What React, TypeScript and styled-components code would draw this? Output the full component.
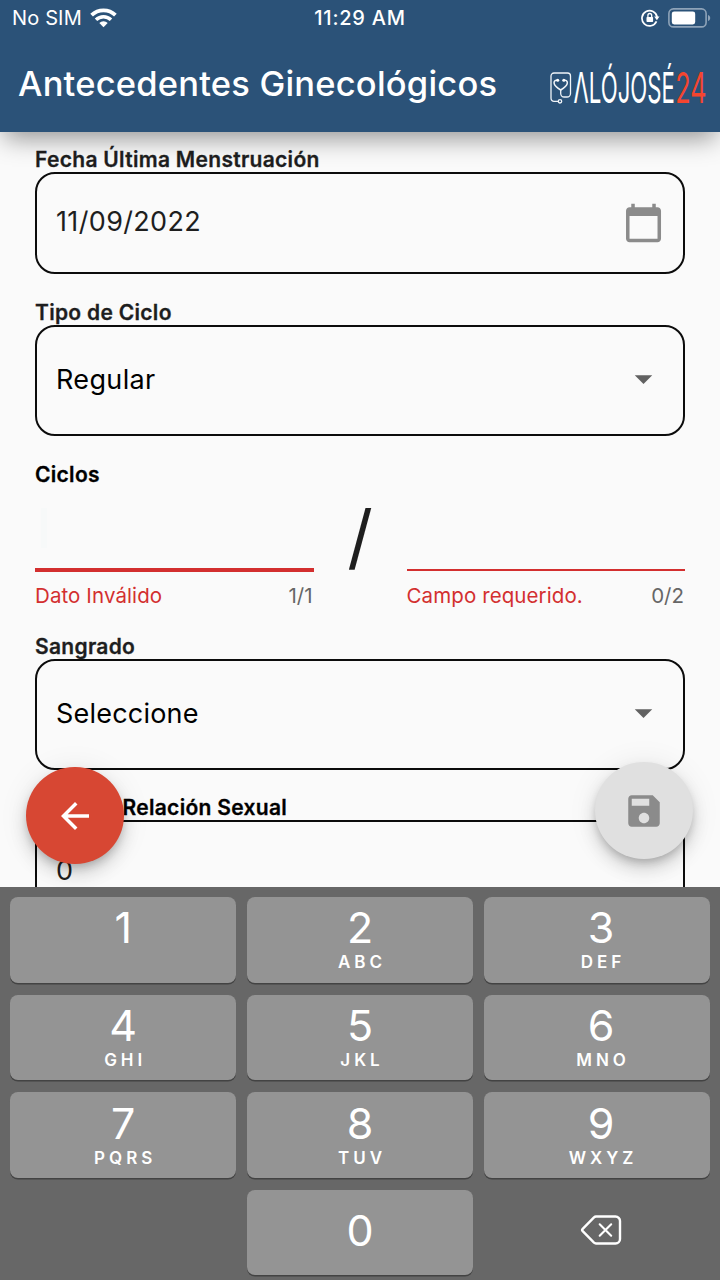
import React from "react";
import styled, { createGlobalStyle } from "styled-components";

const GlobalStyle = createGlobalStyle`
  * { box-sizing: border-box; }
  html, body { margin: 0; padding: 0; background: #fafafa; }
  body { font-family: Inter, "Liberation Sans", sans-serif; overflow: hidden; }
`;

const Screen = styled.div`
  width: 720px;
  height: 1280px;
  display: flex;
  flex-direction: column;
  overflow: hidden;
  background: #fafafa;
  white-space: nowrap;
`;

const Header = styled.header`
  position: relative;
  z-index: 1;
  flex: none;
  height: 132px;
  background: #2b5278;
  color: #fff;
  box-shadow: 0 10px 24px -4px rgba(0, 0, 0, 0.42);
`;

const StatusBar = styled.div`
  height: 37px;
  padding: 0 12px;
  display: grid;
  grid-template-columns: 1fr auto 1fr;
  align-items: center;
  font-size: 20px;
  line-height: 37px;
`;

const StatusGroup = styled.div<{ $end?: boolean }>`
  display: flex;
  align-items: center;
  justify-content: ${(p) => (p.$end ? "flex-end" : "flex-start")};
  gap: 8px;
  margin-right: ${(p) => (p.$end ? -3 : 0)}px;

  svg {
    margin-bottom: 2px;
  }
`;

const Carrier = styled.span`
  letter-spacing: 0.15px;
`;

const Clock = styled.span`
  font-weight: 500;
  letter-spacing: 0.75px;
`;

const TitleBar = styled.div`
  height: 95px;
  padding: 0 12px 2px 18px;
  display: flex;
  align-items: center;
  justify-content: space-between;
`;

const Title = styled.h1`
  margin: 0;
  font-size: 34.5px;
  line-height: 93px;
  font-weight: 500;
  letter-spacing: 0.2px;
`;

const Form = styled.main`
  position: relative;
  flex: 1;
  min-height: 0;
  overflow: hidden;
  padding: 14px 35px 0;
`;

const Field = styled.section<{ $gap: number }>`
  margin-bottom: ${(p) => p.$gap}px;
`;

const Label = styled.div<{ $dark?: boolean; $indent?: number }>`
  font-size: 21px;
  height: 26px;
  line-height: 27px;
  font-weight: 600;
  letter-spacing: 0.3px;
  -webkit-text-stroke: 0.3px currentColor;
  color: ${(p) => (p.$dark ? "#000" : "#1e1e1e")};
  padding-left: ${(p) => p.$indent ?? 0}px;
`;

const Box = styled.div<{ $height: number; $dark?: boolean }>`
  height: ${(p) => p.$height}px;
  border: 2px solid #0c0c0c;
  border-radius: 20px;
  padding: 0 19px 3px 19px;
  display: flex;
  align-items: center;
  justify-content: space-between;
  font-size: 27px;
  color: ${(p) => (p.$dark ? "#000" : "#1e1e1e")};
`;

const Value = styled.span<{ $spacing?: number }>`
  letter-spacing: ${(p) => p.$spacing ?? 0.35}px;
`;

const CycleRow = styled.div`
  display: grid;
  grid-template-columns: 278.5px 1fr 278.5px;
  height: 121px;
`;

const Input = styled.div<{ $focused?: boolean }>`
  height: ${(p) => (p.$focused ? 85 : 84)}px;
  margin-bottom: ${(p) => (p.$focused ? 11 : 12)}px;
  border-bottom: ${(p) => (p.$focused ? 4 : 2)}px solid #d32f2f;
  padding: 21px 0 0 6px;
`;

const Caret = styled.div`
  width: 6px;
  height: 40px;
  background: #f7f9f9;
`;

const Helper = styled.div`
  display: flex;
  justify-content: space-between;
  font-size: 20.5px;
  line-height: 25px;
`;

const ErrorText = styled.span`
  color: #d32f2f;
  letter-spacing: 0.1px;
`;

const Counter = styled.span`
  color: #666;
  padding-right: 1px;
`;

const Slash = styled.div`
  text-align: center;
  font-size: 71px;
  line-height: 99px;
  color: #1e1e1e;
`;

const Fab = styled.button<{ $side: "left" | "right" }>`
  position: absolute;
  bottom: ${(p) => (p.$side === "left" ? 23 : 28)}px;
  ${(p) => (p.$side === "left" ? "left: 26px;" : "right: 27.5px;")}
  width: 97.5px;
  height: 97.5px;
  padding: 0;
  border: 0;
  border-radius: 50%;
  display: flex;
  align-items: center;
  justify-content: center;
  background: ${(p) => (p.$side === "left" ? "#d74733" : "#e0e0e0")};
  color: ${(p) => (p.$side === "left" ? "#fff" : "#8b8b8b")};
  box-shadow: 0 5px 9px -2px rgba(0, 0, 0, 0.2), 0 10px 17px rgba(0, 0, 0, 0.14),
    0 2px 31px rgba(0, 0, 0, 0.08);
`;

const Keyboard = styled.div`
  flex: none;
  height: 393px;
  padding: 10px 10px 0;
  background: #676767;
  display: grid;
  grid-template-columns: repeat(3, 1fr);
  grid-auto-rows: 85.5px;
  gap: 12px 10.4px;
  align-content: start;
`;

const KeyCap = styled.div<{ $plain?: boolean; $center?: boolean; $top?: number; $last?: boolean }>`
  border-radius: 8px;
  background: ${(p) => (p.$plain ? "transparent" : "#949494")};
  box-shadow: ${(p) => (p.$plain ? "none" : "0 1.5px 0 #434343")};
  color: #fff;
  display: flex;
  flex-direction: column;
  align-items: center;
  justify-content: ${(p) => (p.$center ? "center" : "flex-start")};
  padding-top: ${(p) => p.$top ?? 0}px;
  padding-bottom: ${(p) => (p.$center ? 4 : 0)}px;
  padding-left: ${(p) => (p.$last ? 8.5 : 0)}px;
`;

const Digit = styled.div`
  font-size: 43px;
  line-height: 50px;
  font-weight: 400;
`;

const Letters = styled.div`
  margin-top: -1px;
  font-size: 17px;
  line-height: 22px;
  font-weight: 600;
  letter-spacing: 4px;
  margin-right: -4px;
`;

const WifiIcon = () => (
  <svg width="27" height="20" viewBox="0 0 27 20" fill="none" stroke="#fff">
    <path d="M1.6 7.2A17 17 0 0 1 25.4 7.2" strokeWidth="3.8" />
    <path d="M6 11.8A10.8 10.8 0 0 1 21 11.8" strokeWidth="3.5" />
    <path d="M13.5 19.2 9.3 15A6 6 0 0 1 17.7 15Z" fill="#fff" stroke="none" />
  </svg>
);

const RotationLockIcon = () => (
  <svg width="19" height="18" viewBox="0 0 19 18" fill="none" stroke="#fff">
    <path d="M15.5 12.4A7.6 7.6 0 1 1 16.1 8.2" strokeWidth="1.7" />
    <path d="M13.2 7.6h5.3l-2.6 3.7z" fill="#fff" stroke="none" />
    <rect x="5.5" y="8" width="6.6" height="5" rx="0.7" fill="#fff" stroke="none" />
    <path d="M6.9 8.2V6.4a1.9 1.9 0 0 1 3.8 0v1.8" strokeWidth="1.3" />
  </svg>
);

const BatteryIcon = () => (
  <svg width="43" height="20" viewBox="0 0 43 20">
    <rect x="0.9" y="0.9" width="37.2" height="18" rx="4.5" fill="none" stroke="#8ea3b8" strokeWidth="1.6" />
    <rect x="3.8" y="3.4" width="23.4" height="13" rx="2.4" fill="#fff" />
    <path d="M40 6.9c1.6.6 2.2 1.8 2.2 3s-.6 2.4-2.2 3z" fill="#8ea3b8" />
  </svg>
);

const Logo = () => (
  <svg width="158" height="60" viewBox="0 0 158 60" fill="none">
    <g transform="translate(0 8.5)" stroke="#f0f4f8" strokeWidth="1.3">
      <path d="M8 38.8H4a3 3 0 0 1-3-3V13.5a3 3 0 0 1 3-3h13.5a3 3 0 0 1 3 3V31a3.5 3.5 0 0 1-3.5 3.5h-2.8a3.5 3.5 0 0 1-3.5-3.5v-4" />
      <circle cx="10" cy="38.8" r="1.7" />
      <path d="M7.4 17.8H6.3C4.2 18 3.7 19.9 4.3 21.4c.8 2.3 3.6 4.3 6.4 6.1 2.8-1.8 5.6-3.8 6.4-6.1.6-1.5.1-3.4-2-3.6H14" strokeWidth="1.5" />
      <circle cx="7.7" cy="17.8" r="1.5" fill="#fff" stroke="none" />
      <circle cx="13.8" cy="17.8" r="1.5" fill="#fff" stroke="none" />
    </g>
    <g fontFamily="Inter, sans-serif" fontSize="42" fontWeight="400">
      <text transform="translate(23.5 48.5) scale(0.528 1)" fill="#fff">ΛLÓJOSÉ</text>
      <text transform="translate(125.2 48.5) scale(0.6 1)" fill="#f4452f">24</text>
    </g>
  </svg>
);

const MaterialSvg = styled.svg<{ $drop?: number }>`
  width: 42px;
  height: 42px;
  margin-top: ${(p) => p.$drop ?? 0}px;
`;

const MaterialIcon = ({ d, fill = "currentColor", drop }: { d: string; fill?: string; drop?: number }) => (
  <MaterialSvg viewBox="0 0 24 24" fill={fill} $drop={drop}>
    <path d={d} />
  </MaterialSvg>
);

const CALENDAR =
  "M20.3 3h-1V1h-2v2h-10V1h-2v2h-1c-1.1 0-2 .9-2 2v16c0 1.1.9 2 2 2h16c1.1 0 2-.9 2-2V5c0-1.1-.9-2-2-2zm0 18h-16V8h16v13z";
const DROP_DOWN = "M7.3 9.800l5 5 5-5z";
const ARROW_BACK = "M20 11H7.83l5.59-5.59L12 4l-8 8 8 8 1.41-1.41L7.83 13H20v-2z";
const SAVE =
  "M17 3H5c-1.11 0-2 .9-2 2v14c0 1.1.89 2 2 2h14c1.1 0 2-.9 2-2V7l-4-4zm-5 16c-1.66 0-3-1.34-3-3s1.34-3 3-3 3 1.34 3 3-1.34 3-3 3zm3-10H5V5h10v4z";

const BackspaceIcon = () => (
  <svg width="42" height="30" viewBox="0 0 42 30" fill="none" stroke="#fff" strokeLinecap="round" strokeLinejoin="round">
    <path d="M16 1.5H35.5a4.5 4.5 0 0 1 4.5 4.5V24a4.5 4.5 0 0 1-4.5 4.5H16a3 3 0 0 1-2-.8L2.7 16.2a1.7 1.7 0 0 1 0-2.4L14 2.3a3 3 0 0 1 2-.8z" strokeWidth="2.4" />
    <path d="M19.7 9.3 31.2 20.7M31.2 9.3 19.7 20.7" strokeWidth="2.1" />
  </svg>
);

const KEYS: [string, string][] = [
  ["1", ""],
  ["2", "ABC"],
  ["3", "DEF"],
  ["4", "GHI"],
  ["5", "JKL"],
  ["6", "MNO"],
  ["7", "PQRS"],
  ["8", "TUV"],
  ["9", "WXYZ"],
];

export default function App() {
  return (
    <>
      <GlobalStyle />
      <Screen>
        <Header>
          <StatusBar>
            <StatusGroup>
              <Carrier>No SIM</Carrier>
              <WifiIcon />
            </StatusGroup>
            <Clock>11:29 AM</Clock>
            <StatusGroup $end>
              <RotationLockIcon />
              <BatteryIcon />
            </StatusGroup>
          </StatusBar>
          <TitleBar>
            <Title>Antecedentes Ginecológicos</Title>
            <Logo />
          </TitleBar>
        </Header>

        <Form>
          <Field $gap={25}>
            <Label>Fecha Última Menstruación</Label>
            <Box $height={102}>
              <Value>11/09/2022</Value>
              <MaterialIcon d={CALENDAR} fill="#8b8b8b" drop={3} />
            </Box>
          </Field>
          <Field $gap={25}>
            <Label>Tipo de Ciclo</Label>
            <Box $height={111} $dark>
              <Value>Regular</Value>
              <MaterialIcon d={DROP_DOWN} fill="#616161" />
            </Box>
          </Field>
          <Field $gap={25}>
            <Label $dark>Ciclos</Label>
            <CycleRow>
              <div>
                <Input $focused>
                  <Caret />
                </Input>
                <Helper>
                  <ErrorText>Dato Inválido</ErrorText>
                  <Counter>1/1</Counter>
                </Helper>
              </div>
              <Slash>/</Slash>
              <div>
                <Input />
                <Helper>
                  <ErrorText>Campo requerido.</ErrorText>
                  <Counter>0/2</Counter>
                </Helper>
              </div>
            </CycleRow>
          </Field>
          <Field $gap={24}>
            <Label>Sangrado</Label>
            <Box $height={111} $dark>
              <Value $spacing={0.2}>Seleccione</Value>
              <MaterialIcon d={DROP_DOWN} fill="#616161" />
            </Box>
          </Field>
          <Field $gap={0}>
            <Label $dark $indent={87.5}>Relación Sexual</Label>
            <Box $height={103}>
              <Value>0</Value>
            </Box>
          </Field>

          <Fab $side="left" aria-label="Volver">
            <MaterialIcon d={ARROW_BACK} drop={1} />
          </Fab>
          <Fab $side="right" aria-label="Guardar">
            <MaterialIcon d={SAVE} drop={1} />
          </Fab>
        </Form>

        <Keyboard>
          {KEYS.map(([digit, letters], i) => (
            <KeyCap key={digit} $top={i < 3 ? 4.5 : 5.5} $last={i % 3 === 2}>
              <Digit>{digit}</Digit>
              {letters && <Letters>{letters}</Letters>}
            </KeyCap>
          ))}
          <KeyCap $plain />
          <KeyCap $center>
            <Digit>0</Digit>
          </KeyCap>
          <KeyCap $plain $center $last>
            <BackspaceIcon />
          </KeyCap>
        </Keyboard>
      </Screen>
    </>
  );
}
